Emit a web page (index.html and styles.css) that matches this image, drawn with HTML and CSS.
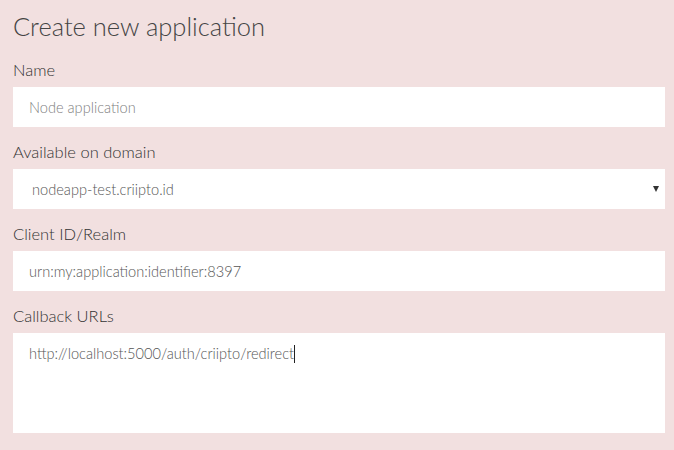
FILE: index.html
```html
<!DOCTYPE html>
<html>
<head>
<meta charset="utf-8">
<link rel="stylesheet" href="styles.css">
</head>
<body>
<div class="page">
  <h1 class="title">Create new application</h1>
  <div class="field">
    <label class="label">Name</label>
    <div class="input"><span class="placeholder">Node application</span></div>
  </div>
  <div class="field">
    <label class="label">Available on domain</label>
    <div class="input select"><span class="value">nodeapp-test.criipto.id</span><span class="caret"></span></div>
  </div>
  <div class="field">
    <label class="label">Client ID/Realm</label>
    <div class="input"><span class="value">urn:my:application:identifier:8397</span></div>
  </div>
  <div class="field">
    <label class="label">Callback URLs</label>
    <div class="input textarea"><span class="value">http://localhost:5000/auth/criipto/redirect</span><span class="cursor"></span></div>
  </div>
</div>
</body>
</html>
```

FILE: styles.css
```css
html, body {
  margin: 0;
  padding: 0;
  background: #f2e0e0;
}
body {
  font-family: Lato, "Open Sans", sans-serif;
  color: #444;
}
.page {
  padding: 11px 9px 0 13px;
  display: flex;
  flex-direction: column;
}
.title {
  margin: 0 0 4px 0;
  font-size: 25.5px;
  font-weight: 300;
  line-height: 30px;
  color: #444;
}
.field {
  display: flex;
  flex-direction: column;
}
.label {
  font-size: 16.5px;
  font-weight: 300;
  line-height: 20px;
  margin: 15px 0 7px;
  color: #333;
}
.input {
  height: 40px;
  background: #fff;
  display: flex;
  align-items: center;
  padding: 0 16px;
  font-size: 14.6px;
  color: #555;
  font-weight: 300;
}
.placeholder { color: #808080; }
.select { padding-left: 19px; }
.select .value { flex: 1; }
.caret {
  width: 0; height: 0;
  border-left: 3px solid transparent;
  border-right: 3px solid transparent;
  border-top: 6px solid #333;
  margin-right: -10px;
}
.textarea {
  height: 100px;
  align-items: flex-start;
  padding-top: 12px;
  box-sizing: border-box;
  line-height: 18px;
}
.cursor {
  display: inline-block;
  width: 1px;
  height: 18px;
  background: #222;
}
```
